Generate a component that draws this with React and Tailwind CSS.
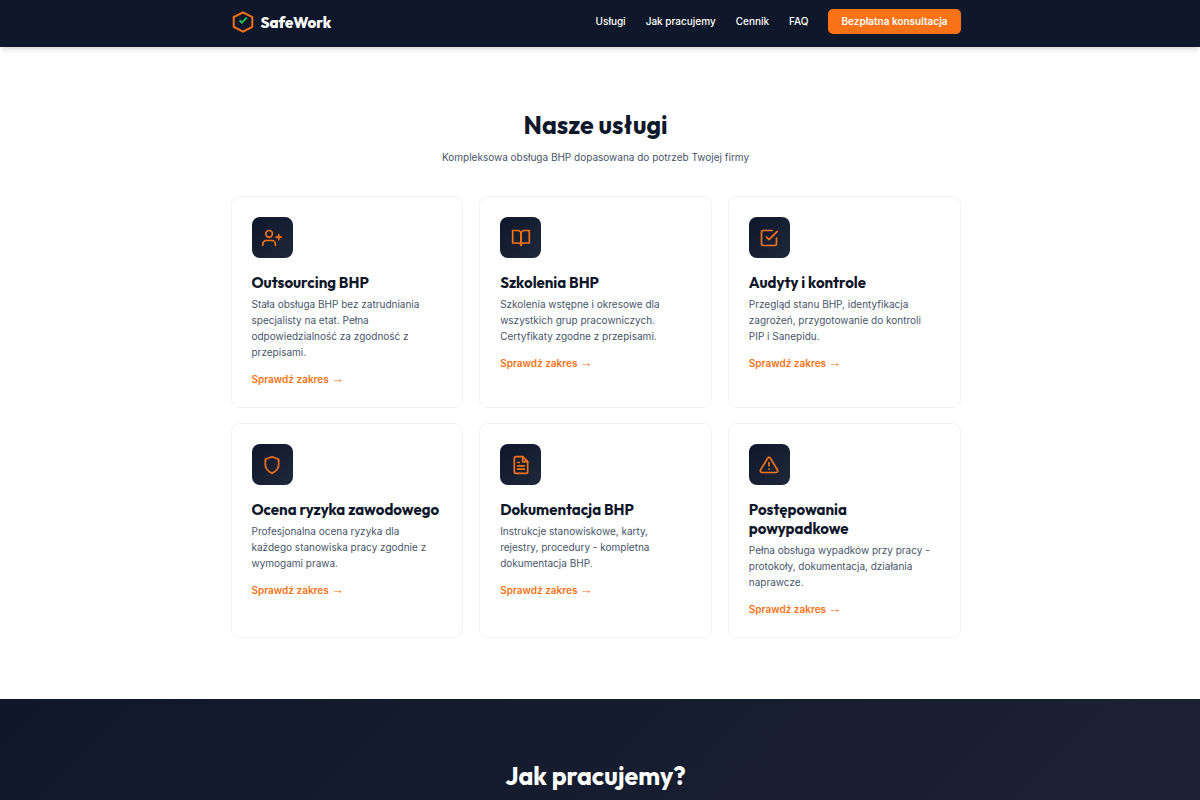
import {
  FiAlertTriangle,
  FiBookOpen,
  FiCheckSquare,
  FiFileText,
  FiShield,
  FiUserPlus,
} from "react-icons/fi";

const navLinks = [
  { label: "Usługi", href: "#uslugi" },
  { label: "Jak pracujemy", href: "#proces" },
  { label: "Cennik", href: "#cennik" },
  { label: "FAQ", href: "#faq" },
];

const services = [
  {
    icon: FiUserPlus,
    title: "Outsourcing BHP",
    text: "Stała obsługa BHP bez zatrudniania specjalisty na etat. Pełna odpowiedzialność za zgodność z przepisami.",
  },
  {
    icon: FiBookOpen,
    title: "Szkolenia BHP",
    text: "Szkolenia wstępne i okresowe dla wszystkich grup pracowniczych. Certyfikaty zgodne z przepisami.",
  },
  {
    icon: FiCheckSquare,
    title: "Audyty i kontrole",
    text: "Przegląd stanu BHP, identyfikacja zagrożeń, przygotowanie do kontroli PIP i Sanepidu.",
  },
  {
    icon: FiShield,
    title: "Ocena ryzyka zawodowego",
    text: "Profesjonalna ocena ryzyka dla każdego stanowiska pracy zgodnie z wymogami prawa.",
  },
  {
    icon: FiFileText,
    title: "Dokumentacja BHP",
    text: "Instrukcje stanowiskowe, karty, rejestry, procedury - kompletna dokumentacja BHP.",
  },
  {
    icon: FiAlertTriangle,
    title: "Postępowania powypadkowe",
    text: "Pełna obsługa wypadków przy pracy - protokoły, dokumentacja, działania naprawcze.",
  },
];

const Logo = () => (
  <a href="#" className="flex items-center gap-1.5">
    <svg viewBox="0 0 24 24" fill="none" className="h-6 w-6" aria-hidden="true">
      <path
        d="M12 2.4 21.3 7.2V16.8L12 21.6 2.7 16.8V7.2Z"
        stroke="#f97316"
        strokeWidth="1.9"
      />
      <path d="m8.6 10.4 2.2 2.2 5-5" stroke="#22c55e" strokeWidth="1.9" />
    </svg>
    <span className="pt-0.5 font-[Outfit,Lato,sans-serif] text-[15px] leading-6 font-extrabold text-white">
      SafeWork
    </span>
  </a>
);

const Header = () => (
  <header className="bg-[#0f172a] pr-[9px] shadow-md">
    <div className="mx-auto flex h-[47px] max-w-[730px] items-center justify-between pb-1">
      <Logo />
      <nav className="flex items-center gap-5 text-[10px] font-medium text-white">
        {navLinks.map((link) => (
          <a key={link.label} href={link.href}>
            {link.label}
          </a>
        ))}
        <a
          href="#kontakt"
          className="rounded-[5px] bg-[#f97316] px-[13px] py-1 leading-[17px] font-semibold"
        >
          Bezpłatna konsultacja
        </a>
      </nav>
    </div>
  </header>
);

const ServiceCard = ({ service }) => {
  const Icon = service.icon;

  return (
    <article className="rounded-lg border border-[#f1f3f6] bg-white p-5">
      <div className="flex h-[41px] w-[41px] items-center justify-center rounded-lg bg-linear-135 from-[#0f172a] to-[#1e293b] text-[#f97316]">
        <Icon className="h-5 w-5" />
      </div>
      <h3 className="mt-[15px] font-[Outfit,Lato,sans-serif] text-[15px] leading-[19px] font-bold text-[#0f172a]">
        {service.title}
      </h3>
      <p className="mt-1 pr-2 text-[10px] leading-4 text-[#475569]">
        {service.text}
      </p>
      <a
        href="#kontakt"
        className="mt-[11px] flex items-center gap-0.5 text-[10px] leading-4 font-semibold text-[#f97316]"
      >
        Sprawdź zakres
        <span className="font-['Liberation_Sans',sans-serif] text-[13px] font-normal">
          →
        </span>
      </a>
    </article>
  );
};

const App = () => (
  <div className="min-h-screen bg-white font-[Inter,sans-serif]">
    <Header />

    <main>
      {/* Services */}
      <section id="uslugi" className="pt-[62px] pr-[9px] pb-[61px]">
        <div className="mx-auto max-w-[730px]">
          <div className="text-center">
            <h2 className="font-[Outfit,Lato,sans-serif] text-[25px] leading-8 font-bold text-[#0f172a]">
              Nasze usługi
            </h2>
            <p className="mt-2 text-[10px] leading-4 text-[#475569]">
              Kompleksowa obsługa BHP dopasowana do potrzeb Twojej firmy
            </p>
          </div>
          <div className="mt-[31px] grid grid-cols-3 gap-x-4 gap-y-[15px]">
            {services.map((service) => (
              <ServiceCard key={service.title} service={service} />
            ))}
          </div>
        </div>
      </section>

      {/* Process */}
      <section
        id="proces"
        className="h-[101px] bg-linear-135 from-[#0f172a] to-[#1c2233] pt-[61px] pr-[9px]"
      >
        <h2 className="text-center font-[Outfit,Lato,sans-serif] text-[25px] leading-8 font-bold text-white">
          Jak pracujemy?
        </h2>
      </section>
    </main>
  </div>
);

export default App;
